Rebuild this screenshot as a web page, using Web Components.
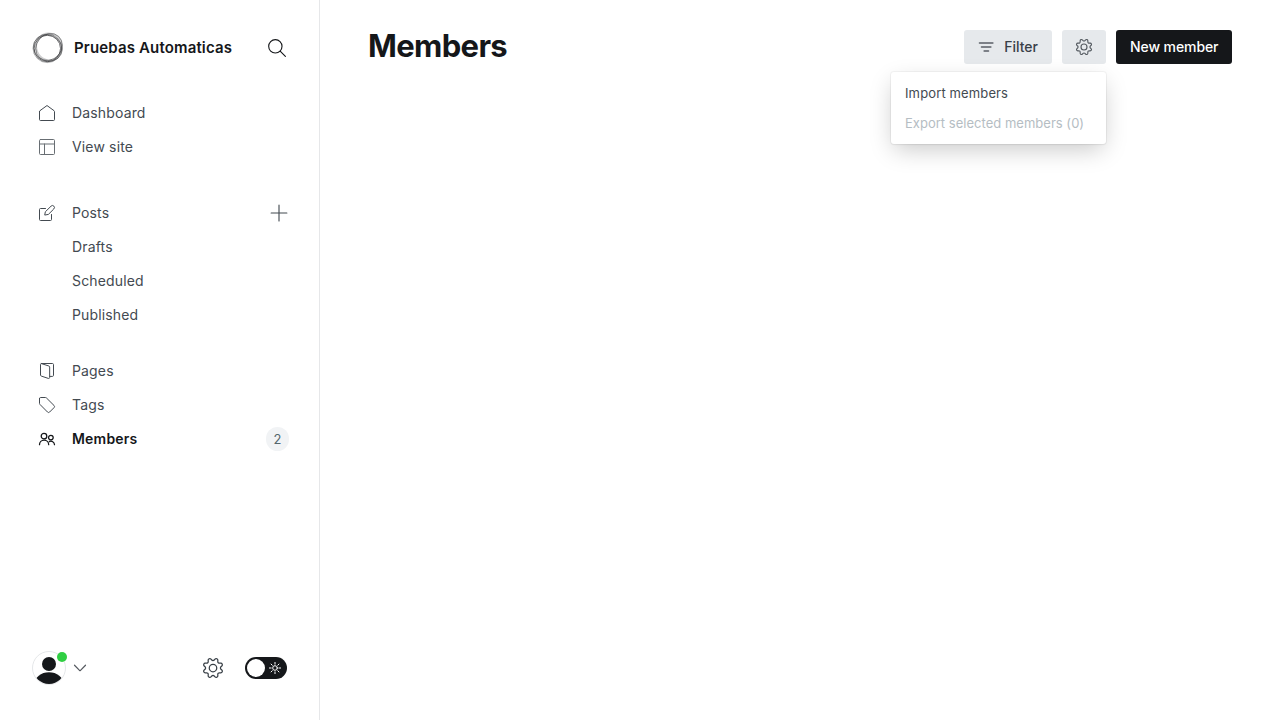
<!DOCTYPE html>
<html lang="en">
<head>
<meta charset="utf-8">
<title>Members</title>
<style>
html, body { margin: 0; height: 100%; background: #fff; }
body { font-family: Inter, sans-serif; color: #15171a; overflow: hidden; }
</style>
</head>
<body>
<app-shell>
  <side-bar slot="nav"></side-bar>
  <members-page></members-page>
</app-shell>
<script>
const GEAR = '<path d="M10.546 2.438a1.957 1.957 0 002.908 0L14.4 1.4a1.959 1.959 0 013.41 1.413l-.071 1.4a1.958 1.958 0 002.051 2.054l1.4-.071a1.959 1.959 0 011.41 3.41l-1.042.94a1.96 1.96 0 000 2.909l1.042.94a1.959 1.959 0 01-1.413 3.41l-1.4-.071a1.958 1.958 0 00-2.056 2.056l.071 1.4A1.959 1.959 0 0114.4 22.6l-.941-1.041a1.959 1.959 0 00-2.908 0L9.606 22.6A1.959 1.959 0 016.2 21.192l.072-1.4a1.958 1.958 0 00-2.056-2.056l-1.4.071A1.958 1.958 0 011.4 14.4l1.041-.94a1.96 1.96 0 000-2.909L1.4 9.606A1.958 1.958 0 012.81 6.2l1.4.071a1.958 1.958 0 002.058-2.06L6.2 2.81A1.959 1.959 0 019.606 1.4z"/><circle cx="12" cy="12" r="4.5"/>';
const ICONS = {
  home: '<path d="M.75 9.8v12.2c0 .7.6 1.25 1.25 1.25h20c.7 0 1.25-.55 1.25-1.25V9.8c0-.5-.2-.9-.6-1.2L12 .8 1.350 8.600c-.4.3-.6.700-.6 1.200z"/>',
  layout: '<g opacity=".8"><rect x=".75" y=".75" width="22.500" height="22.500" rx="1.500"/><path d="M.75 7.500h22.500M8.250 7.500v15.750"/></g>',
  edit: '<path d="M13.500 14.200l-4.900.9.900-4.900 8.600-8.500a3 3 0 0 1 4.200 0 2.900 2.900 0 0 1 0 4.200zM18.750 14.250v7.500a1.500 1.500 0 0 1-1.500 1.500h-15a1.500 1.500 0 0 1-1.500-1.500v-15a1.500 1.500 0 0 1 1.500-1.500h7.500"/>',
  pages: '<path d="M3.800.75h16.500c.8 0 1.450.650 1.450 1.450v16.400c0 .8-.65 1.500-1.450 1.500h-4M3.800.75c-.9 0-1.550.650-1.550 1.500v15.800c0 .8.500 1.400 1.300 1.600l10.500 3.500c1 .3 1.950-.3 1.950-1.350V6.100c0-.8-.5-1.400-1.200-1.600L3.300.8"/>',
  tag: '<path d="M.75 2.250v7.300c0 .6.200 1.100.7 1.600l11.300 11.400a2.250 2.250 0 0 0 3.200 0l6.600-6.600a2.250 2.250 0 0 0 0-3.200L11.200 1.450c-.4-.4-1-.7-1.600-.7H2.250A1.500 1.500 0 0 0 .75 2.250z"/>',
  members: '<circle cx="7.500" cy="7.700" r="4.200"/><path d="M.75 20.500a6.900 6.900 0 0 1 13.800 0"/><circle cx="17.800" cy="9.900" r="3.500"/><path d="M15.500 15.900a5.400 5.400 0 0 1 7.750 4.600"/>',
  search: '<circle cx="9.800" cy="9.800" r="8.900"/><path d="M16.200 16.200l7 7"/>',
  plus: '<path d="M1.500 12h21M12 1.500v21"/>',
  chevron: '<path d="M1 6.500l10.500 10.700a.7.7 0 0 0 1 0L23 6.500"/>',
  filter: '<path d="M2.500 6h19.500M5.500 12h13.500M9.500 18h6"/>',
  sun: '<circle cx="12" cy="12" r="4.600"/><path d="M12 .8v3.500M12 19.700v3.500M.8 12h3.500M19.700 12h3.500M4.100 4.100l2.400 2.400M17.500 17.500l2.400 2.400M4.100 19.900l2.400-2.400M17.500 6.500l2.400-2.400"/>',
  gear: GEAR
};

function define(name, render) {
  customElements.define(name, class extends HTMLElement {
    connectedCallback() {
      if (!this.shadowRoot) this.attachShadow({ mode: 'open' }).innerHTML = render(this);
    }
  });
}

define('ui-icon', el => `<style>
:host{display:block;flex:none}
svg{display:block;overflow:visible;fill:none;stroke:currentColor;stroke-linecap:round;stroke-linejoin:round}
</style><svg width="${el.getAttribute('size')}" height="${el.getAttribute('size')}" viewBox="0 0 24 24" stroke-width="${el.getAttribute('weight') || 1.5}">${ICONS[el.getAttribute('name')]}</svg>`);

define('site-logo', () => `<style>:host{display:block;flex:none}svg{display:block;fill:none;stroke:#202124}</style>
<svg width="32" height="32" viewBox="0 0 32 32">
<circle cx="15.300" cy="16.500" r="13.200" stroke-width="1" opacity=".65"/>
<ellipse cx="17" cy="15" rx="14.300" ry="12.400" transform="rotate(-48 17 15)" stroke-width=".8" opacity=".6"/>
<ellipse cx="15.800" cy="16" rx="14.600" ry="13" transform="rotate(25 15.800 16)" stroke-width=".8" opacity=".5"/>
<ellipse cx="17" cy="15" rx="13.500" ry="12.800" transform="rotate(65 17 15)" stroke-width="2" opacity=".22"/>
<circle cx="15.300" cy="16.300" r="14.300" stroke-width="1" opacity=".35"/>
</svg>`);

define('nav-item', el => `<style>
:host{display:flex;align-items:center;height:34px;padding:0 31px 0 39px;font-size:14px;letter-spacing:.15px;color:#434a51}
:host([active]){font-weight:600;letter-spacing:.2px;color:#15171a;padding-right:30px}
.icon{width:33px;flex:none}
.label{flex:1;padding-bottom:2px}
</style><span class="icon">${el.getAttribute('icon') ? `<ui-icon name="${el.getAttribute('icon')}" size="16" weight="${el.hasAttribute('active') ? 1.9 : 1.5}"></ui-icon>` : ''}</span><span class="label"><slot></slot></span><slot name="end"></slot>`);

define('count-badge', () => `<style>:host{display:flex;align-items:center;justify-content:center;box-sizing:border-box;width:23px;height:24px;padding-bottom:1px;border-radius:12px;background:#f1f3f5;color:#54666d;font-size:13px;font-weight:400;letter-spacing:0}</style><slot></slot>`);

define('user-avatar', () => `<style>:host{display:block;position:relative;width:34px;height:34px}svg{display:block}i{position:absolute;left:25px;top:1px;width:10px;height:10px;border-radius:50%;background:#30cf43}</style>
<svg width="34" height="34" viewBox="0 0 34 34"><defs><clipPath id="c"><circle cx="17" cy="17" r="16"/></clipPath></defs><circle cx="17" cy="17" r="16.500" fill="#fff" stroke="#e5e7e9"/><g clip-path="url(#c)" fill="#15171a"><circle cx="17" cy="13" r="7"/><ellipse cx="17" cy="33" rx="14.500" ry="11.700"/></g></svg><i></i>`);

define('theme-toggle', () => `<style>:host{display:flex;align-items:center;justify-content:space-between;box-sizing:border-box;width:42px;height:22px;padding:0 6px 0 2px;border-radius:11px;background:#15171a;color:#fff}b{width:18px;height:18px;border-radius:50%;background:#fff}</style><b></b><ui-icon name="sun" size="12" weight="2"></ui-icon>`);

define('side-bar', () => `<style>
:host{display:flex;flex-direction:column;box-sizing:border-box;height:100%;border-right:1px solid #e6e7e9}
header{display:flex;align-items:center;height:32px;padding:32px 33px 0 32px}
h2{margin:0 0 0 10px;flex:1;font-size:15px;font-weight:600;line-height:20px;letter-spacing:.15px;white-space:nowrap}
nav{display:flex;flex-direction:column;flex:1;padding-top:32px}
.posts{margin-top:32px}.pages{margin-top:22px}
footer{display:flex;align-items:center;padding:0 32px 35px}
.chev{margin-left:8px;color:#54595f}.set{margin-left:auto;margin-right:22px;color:#394047}
</style>
<header><site-logo></site-logo><h2>Pruebas Automaticas</h2><ui-icon name="search" size="18"></ui-icon></header>
<nav>
<div><nav-item icon="home">Dashboard</nav-item><nav-item icon="layout">View site</nav-item></div>
<div class="posts"><nav-item icon="edit">Posts<ui-icon slot="end" name="plus" size="18"></ui-icon></nav-item><nav-item>Drafts</nav-item><nav-item>Scheduled</nav-item><nav-item>Published</nav-item></div>
<div class="pages"><nav-item icon="pages">Pages</nav-item><nav-item icon="tag">Tags</nav-item><nav-item icon="members" active>Members<count-badge slot="end">2</count-badge></nav-item></div>
</nav>
<footer><user-avatar></user-avatar><ui-icon class="chev" name="chevron" size="12" weight="2.400"></ui-icon><ui-icon class="set" name="gear" size="20"></ui-icon><theme-toggle></theme-toggle></footer>`);

define('ui-button', () => `<style>:host{display:flex;align-items:center;box-sizing:border-box;height:34px;padding:0 14px 1px;border-radius:3px;background:#e6e9ec;color:#394047;font-size:14px;font-weight:500;white-space:nowrap}
:host([primary]){width:116px;letter-spacing:-.09px;background:#15171a;color:#fff}</style><slot></slot>`);

define('action-menu', () => `<style>:host{display:block;box-sizing:border-box;width:215px;padding:6px 0;border-radius:3px;background:#fff;box-shadow:0 0 0 1px rgba(0,0,0,.04),0 1px 2px rgba(0,0,0,.04),0 8px 24px -3px rgba(0,0,0,.22)}</style><slot></slot>`);

define('menu-item', () => `<style>:host{display:flex;align-items:center;height:30px;padding:0 14px;font-size:13px;letter-spacing:.13px;color:#434a51;white-space:nowrap}:host([disabled]){letter-spacing:.02px;color:#b5bdc3}</style><slot></slot>`);

define('members-page', () => `<style>
:host{display:block;padding:30px 48px}
header{display:flex;justify-content:space-between;align-items:flex-start;height:34px}
h1{margin:-4px 0 0;font-size:31px;line-height:40px;font-weight:700;letter-spacing:-.65px}
.actions{display:flex;gap:10px}
.filter{color:#7c8087;margin-right:10px}
.wrap{position:relative}
.gear{color:#555b61}
action-menu{position:absolute;right:0;top:42px}
</style>
<header><h1>Members</h1><div class="actions">
<ui-button><ui-icon class="filter" name="filter" size="16" weight="2.900"></ui-icon><span>Filter</span></ui-button>
<div class="wrap"><ui-button><ui-icon class="gear" name="gear" size="16" weight="1.700"></ui-icon></ui-button>
<action-menu><menu-item>Import members</menu-item><menu-item disabled>Export selected members (0)</menu-item></action-menu></div>
<ui-button primary>New member</ui-button></div></header>`);

define('app-shell', () => `<style>:host{display:grid;grid-template-columns:320px 1fr;height:100vh}</style><slot name="nav"></slot><slot></slot>`);
</script>
</body>
</html>
